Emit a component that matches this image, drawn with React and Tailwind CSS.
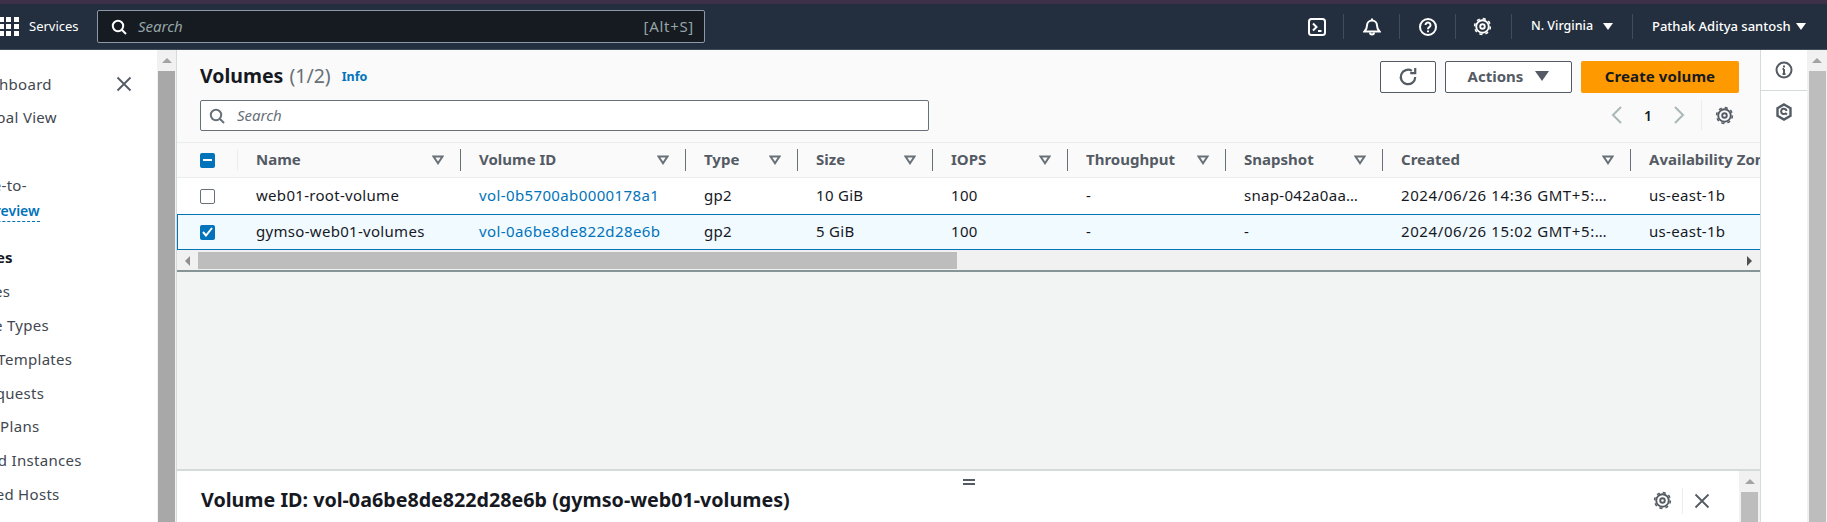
const FONT = "font-['Noto_Sans','Open_Sans',sans-serif]";

function Gear({ size = 20, color = '#545b64' }) {
  return (
    <svg width={size} height={size} viewBox="0 0 20 20" fill="none" stroke={color}>
      <circle cx="10" cy="10" r="6.600" strokeWidth="2" />
      <circle cx="10" cy="10" r="8.300" strokeWidth="1.600" strokeDasharray="3.260 3.260" />
      <circle cx="10" cy="10" r="2.400" strokeWidth="2" />
    </svg>
  );
}

function SortIcon() {
  return (
    <svg width="12" height="10" viewBox="0 0 12 10" fill="none" stroke="#687078" strokeWidth="2">
      <path d="M1.500 1.500h9L6 8.200z" />
    </svg>
  );
}

function Caret({ color = '#fff', w = 10, h = 7 }) {
  return (
    <svg width={w} height={h} viewBox="0 0 10 7" fill={color}>
      <path d="M0 0h10L5 7z" />
    </svg>
  );
}

function NavSep() {
  return <div className="h-[25px] w-px bg-[#414d5c]" />;
}

function Close({ size = 16, color = '#545b64' }) {
  return (
    <svg width={size} height={size} viewBox="0 0 16 16" fill="none" stroke={color} strokeWidth="1.800">
      <path d="M1.500 1.500l13 13M14.500 1.500l-13 13" />
    </svg>
  );
}

function SearchIcon({ color = '#fff' }) {
  return (
    <svg width="16" height="16" viewBox="0 0 16 16" fill="none" stroke={color} strokeWidth="2">
      <circle cx="7" cy="7" r="5.200" />
      <path d="M11 11l4 4" />
    </svg>
  );
}

function TopNav() {
  return (
    <div className="flex h-[46px] shrink-0 items-center bg-[#232f3e] border-b border-[#414d5c] text-white">
      <div className="grid w-[20px] grid-cols-3 gap-[2px] ml-[-1px]">
        {[...Array(9)].map((_, i) => (
          <div key={i} className="h-[5px] w-[5px] bg-white" />
        ))}
      </div>
      <span className="ml-[10px] w-[50px] text-[13px]">Services</span>
      <div className="ml-[18px] flex h-[33px] w-[608px] items-center rounded-[2px] border border-[#8d99a8] bg-[#161a21] pl-[13px] pr-[10px]">
        <SearchIcon />
        <span className="ml-[11px] flex-1 text-[15px] italic text-[#95a5a6]">Search</span>
        <span className="text-[15px] tracking-[0.7px] text-[#95a5a6]">[Alt+S]</span>
      </div>
      <div className="ml-[603px] flex items-center">
        <svg width="18" height="18" viewBox="0 0 18 18" fill="none" stroke="#fff" strokeWidth="2">
          <rect x="1" y="1" width="16" height="16" rx="2.500" />
          <path d="M5 5.500L8.500 9 5 12.500M10 13h3.500" />
        </svg>
        <div className="ml-[17px]"><NavSep /></div>
        <svg className="ml-[19px]" width="18" height="18" viewBox="0 0 18 18" fill="none" stroke="#fff" strokeWidth="2">
          <path d="M1.500 13.500h15c-1.800-1.800-2.500-3-2.500-6 0-3-2.200-5-5-5s-5 2-5 5c0 3-.7 4.200-2.500 6z" />
          <path d="M7 14.500a2 2 0 004 0" />
          <path d="M9 .5v2" />
        </svg>
        <div className="ml-[18px]"><NavSep /></div>
        <svg className="ml-[19px]" width="18" height="18" viewBox="0 0 18 18" fill="none" stroke="#fff" strokeWidth="2">
          <circle cx="9" cy="9" r="8" />
          <path d="M6.500 7a2.500 2.500 0 113.800 2.100C9.400 9.700 9 10.200 9 11.200" />
          <path d="M9 12.500v1.800" />
        </svg>
        <div className="ml-[18px]"><NavSep /></div>
        <div className="ml-[17px]"><Gear size={19} color="#fff" /></div>
        <div className="ml-[19px]"><NavSep /></div>
        <span className="ml-[19px] w-[65px] text-[12.500px] font-medium">N. Virginia</span>
        <div className="ml-[7px]"><Caret /></div>
        <div className="ml-[19px]"><NavSep /></div>
        <span className="ml-[19px] w-[138px] whitespace-nowrap text-[13px] font-medium">Pathak Aditya santosh</span>
        <div className="ml-[6px]"><Caret /></div>
      </div>
    </div>
  );
}

const sideItems = [
  { label: 'EC2 Dashboard', h: 'h-[33px] items-center' },
  { label: 'EC2 Global View', h: 'h-[33px] items-center' },
  { label: '', h: 'h-[34px] items-center' },
  { label: 'Console-to-', h: 'h-[34px] items-center pl-[3px]' },
  { label: 'Code Preview', h: 'h-[38px] items-start pl-[8px]', link: true },
  { label: 'Instances', h: 'h-[34px] items-center', bold: true },
  { label: 'Instances', h: 'h-[34px] items-center' },
  { label: 'Instance Types', h: 'h-[34px] items-center' },
  { label: 'Launch Templates', h: 'h-[34px] items-center' },
  { label: 'Spot Requests', h: 'h-[34px] items-center' },
  { label: 'Savings Plans', h: 'h-[33px] items-center' },
  { label: 'Reserved Instances', h: 'h-[34px] items-center' },
  { label: 'Dedicated Hosts', h: 'h-[34px] items-center' },
];

function Sidebar() {
  return (
    <div className="relative w-[157px] shrink-0 overflow-hidden bg-white">
      <button className="absolute left-[116px] top-[26px]">
        <Close />
      </button>
      <div className="ml-[-60px] pt-[18px] text-[15px] tracking-[0.3px] text-[#414750]">
        {sideItems.map((it, i) => (
          <div key={i} className={`flex whitespace-nowrap ${it.h}`}>
            {it.link ? (
              <span className="border-b border-dashed border-[#0073bb] pb-[1px] text-[14px] font-semibold leading-[18px] tracking-normal text-[#0073bb]">{it.label}</span>
            ) : (
              <span className={it.bold ? 'font-bold tracking-normal text-[#16191f]' : ''}>{it.label}</span>
            )}
          </div>
        ))}
      </div>
    </div>
  );
}

function VScroll({ thumb = 'bg-[#a8a8a8]', thumbW = 'w-[17px]', width = 'w-[20px]' }) {
  return (
    <div className={`flex shrink-0 flex-col items-center bg-[#f1f1f1] ${width}`}>
      <div className="flex h-[21px] items-center justify-center">
        <div className="h-0 w-0 border-x-[5px] border-b-[5px] border-x-transparent border-b-[#a3a3a3]" />
      </div>
      <div className={`flex-1 ${thumbW} ${thumb}`} />
    </div>
  );
}

const cols = [
  { label: 'Name', w: 'w-[223px]' },
  { label: 'Volume ID', w: 'w-[225px]' },
  { label: 'Type', w: 'w-[112px]' },
  { label: 'Size', w: 'w-[135px]' },
  { label: 'IOPS', w: 'w-[135px]' },
  { label: 'Throughput', w: 'w-[158px]' },
  { label: 'Snapshot', w: 'w-[157px]' },
  { label: 'Created', w: 'w-[248px]' },
  { label: 'Availability Zone', w: 'w-[200px]', last: true },
];

const rows = [
  ['web01-root-volume', 'vol-0b5700ab0000178a1', 'gp2', '10 GiB', '100', '-', 'snap-042a0aa…', '2024/06/26 14:36 GMT+5:…', 'us-east-1b'],
  ['gymso-web01-volumes', 'vol-0a6be8de822d28e6b', 'gp2', '5 GiB', '100', '-', '-', '2024/06/26 15:02 GMT+5:…', 'us-east-1b'],
];

function HeaderRow() {
  return (
    <div className="flex h-[36px] w-max items-center border-y border-[#eaeded] bg-[#fafafa]">
      <div className="flex h-[22px] w-[61px] shrink-0 items-center border-r border-[#eaeded] pl-[23px]">
        <div className="flex h-[15px] w-[15px] items-center justify-center rounded-[2px] bg-[#0073bb]">
          <div className="h-[2px] w-[9px] bg-white" />
        </div>
      </div>
      {cols.map((c) => (
        <div
          key={c.label}
          className={`flex h-[22px] shrink-0 items-center justify-between pl-[18px] pr-[16px] ${c.w} ${c.last ? '' : 'border-r border-[#687078]'}`}
        >
          <span className="mt-[-1px] whitespace-nowrap text-[15px] font-bold text-[#545b64]">{c.label}</span>
          {!c.last && <SortIcon />}
        </div>
      ))}
    </div>
  );
}

function cellClass(i) {
  if (i === 1) return 'text-[#0073bb] tracking-[0.38px]';
  if (i === 7) return 'text-[#16191f] tracking-[0.6px]';
  return 'text-[#16191f] tracking-[0.3px]';
}

function Row({ cells, selected }) {
  return (
    <div
      className={`flex h-[36px] w-max items-center ${
        selected ? 'border-y border-l border-[#0073bb] bg-[#f1faff]' : 'bg-white'
      }`}
    >
      <div className={`flex shrink-0 items-center ${selected ? 'w-[60px] pl-[22px]' : 'w-[61px] pl-[23px]'}`}>
        {selected ? (
          <div className="flex h-[15px] w-[15px] items-center justify-center rounded-[2px] bg-[#0073bb]">
            <svg width="11" height="10" viewBox="0 0 11 10" fill="none" stroke="#fff" strokeWidth="2">
              <path d="M1 5l3 3.500L10 1" />
            </svg>
          </div>
        ) : (
          <div className="h-[15px] w-[15px] rounded-[2px] border border-[#687078] bg-white" />
        )}
      </div>
      {cells.map((t, i) => (
        <div key={i} className={`shrink-0 whitespace-nowrap pb-[2px] pl-[18px] text-[15px] ${cols[i].w} ${cellClass(i)}`}>
          {t}
        </div>
      ))}
    </div>
  );
}

function HScroll() {
  return (
    <div className="flex h-[22px] shrink-0 items-center border-b-2 border-[#879596] bg-[#f1f1f1] pb-[1px] pt-[2px]">
      <div className="flex w-[21px] justify-center">
        <div className="h-0 w-0 border-y-[5px] border-r-[5px] border-y-transparent border-r-[#8f8f8f]" />
      </div>
      <div className="h-[17px] w-[759px] bg-[#bdbdbd]" />
      <div className="flex-1" />
      <div className="flex w-[21px] justify-center">
        <div className="h-0 w-0 border-y-[5px] border-l-[5px] border-y-transparent border-l-[#505050]" />
      </div>
    </div>
  );
}

function PageHeader() {
  return (
    <div className="flex h-[92px] shrink-0 justify-between bg-[#fafafa] pl-[23px] pr-[21px]">
      <div className="pt-[13px]">
        <div className="flex h-[26px] items-center">
          <span className="text-[19.500px] font-bold text-[#16191f]">Volumes</span>
          <span className="ml-[6px] text-[19.500px] text-[#687078]">(1/2)</span>
          <span className="ml-[11px] mt-[3px] text-[12.500px] font-bold text-[#0073bb]">Info</span>
        </div>
        <div className="mt-[11px] flex h-[31px] w-[729px] items-center rounded-[2px] border border-[#687078] bg-white pl-[8px]">
          <SearchIcon color="#687078" />
          <span className="ml-[12px] text-[15px] italic text-[#687078]">Search</span>
        </div>
      </div>
      <div className="flex flex-col items-end pt-[11px]">
        <div className="flex h-[32px] gap-[9px]">
          <button className="flex w-[56px] items-center justify-center rounded-[2px] border border-[#545b64] bg-white">
            <svg width="20" height="20" viewBox="0 0 18 18" fill="none" stroke="#545b64" strokeWidth="2">
              <path d="M15.500 9A6.500 6.500 0 1 1 12.500 3.500" />
              <path d="M15.500 1v4.500H11" />
            </svg>
          </button>
          <button className="flex w-[127px] items-center justify-center gap-[12px] rounded-[2px] border border-[#545b64] bg-white pb-[2px] text-[15px] font-bold text-[#545b64]">
            Actions
            <Caret color="#545b64" w={14} h={10} />
          </button>
          <button className="w-[158px] rounded-[2px] bg-[#ff9900] pb-[2px] text-[15px] font-bold tracking-[0.1px] text-[#16191f]">
            Create volume
          </button>
        </div>
        <div className="mt-[7px] flex h-[30px] items-center">
          <svg width="12" height="18" viewBox="0 0 12 18" fill="none" stroke="#aab7b8" strokeWidth="2">
            <path d="M10 1L2 9l8 8" />
          </svg>
          <span className="ml-[21px] w-[20px] text-[14px] font-semibold text-[#16191f]">1</span>
          <svg className="ml-[9px]" width="12" height="18" viewBox="0 0 12 18" fill="none" stroke="#aab7b8" strokeWidth="2">
            <path d="M2 1l8 8-8 8" />
          </svg>
          <div className="ml-[16px] h-[30px] w-px bg-[#eaeded]" />
          <div className="ml-[13px] mr-[5px]"><Gear size={19} /></div>
        </div>
      </div>
    </div>
  );
}

function SplitPanel() {
  return (
    <div className="relative flex h-[53px] shrink-0 border-t-2 border-[#d5dbdb] bg-white">
      <div className="absolute left-[786px] top-[8px] h-[6px] w-[12px] border-y-2 border-[#545b64]" />
      <div className="flex flex-1 items-center pl-[24px] pt-[6px]">
        <span className="flex-1 text-[19.700px] font-bold text-[#16191f]">Volume ID: vol-0a6be8de822d28e6b (gymso-web01-volumes)</span>
        <div className="mt-[2px] flex items-center">
          <Gear size={19} />
          <div className="ml-[10px] h-[26px] w-px bg-[#eaeded]" />
          <div className="ml-[11px] mr-[29px]"><Close /></div>
        </div>
      </div>
      <VScroll thumb="bg-[#bdbdbd]" width="w-[21px]" />
    </div>
  );
}

function Rail() {
  return (
    <div className="w-[47px] shrink-0 border-l border-[#d5dbdb] bg-white">
      <div className="flex h-[41px] items-center justify-center border-b border-[#d5dbdb]">
        <svg width="18" height="18" viewBox="0 0 18 18" fill="none" stroke="#545b64" strokeWidth="2">
          <circle cx="9" cy="9" r="7.500" />
          <path d="M9 8v5M7.500 8H9M7.500 13h3M9 4.500v2" />
        </svg>
      </div>
      <div className="flex h-[41px] items-center justify-center">
        <svg width="18" height="18" viewBox="0 0 18 18" fill="none" stroke="#545b64" strokeWidth="2.400">
          <path d="M9 1.500l6.500 3.700v7.600L9 16.500l-6.500-3.700V5.200z" />
          <path d="M12 11.500L10 10M11.500 8a2.700 2.700 0 1 0-1 2.500" strokeWidth="2" />
        </svg>
      </div>
    </div>
  );
}

export default function App() {
  return (
    <div className={`flex h-[522px] w-[1827px] flex-col overflow-hidden bg-white ${FONT}`}>
      <div className="h-[4px] shrink-0 bg-[#3d3049]" />
      <TopNav />
      <div className="flex min-h-0 flex-1">
        <Sidebar />
        <VScroll width="w-[19px]" />
        <div className="flex min-w-0 flex-1 flex-col border-l border-[#d5dbdb] bg-[#f2f3f3]">
          <PageHeader />
          <div className="shrink-0 overflow-hidden">
            <HeaderRow />
            <Row cells={rows[0]} />
            <Row cells={rows[1]} selected />
          </div>
          <HScroll />
          <div className="flex-1" />
          <SplitPanel />
        </div>
        <Rail />
        <VScroll thumb="bg-[#bdbdbd]" />
      </div>
    </div>
  );
}
